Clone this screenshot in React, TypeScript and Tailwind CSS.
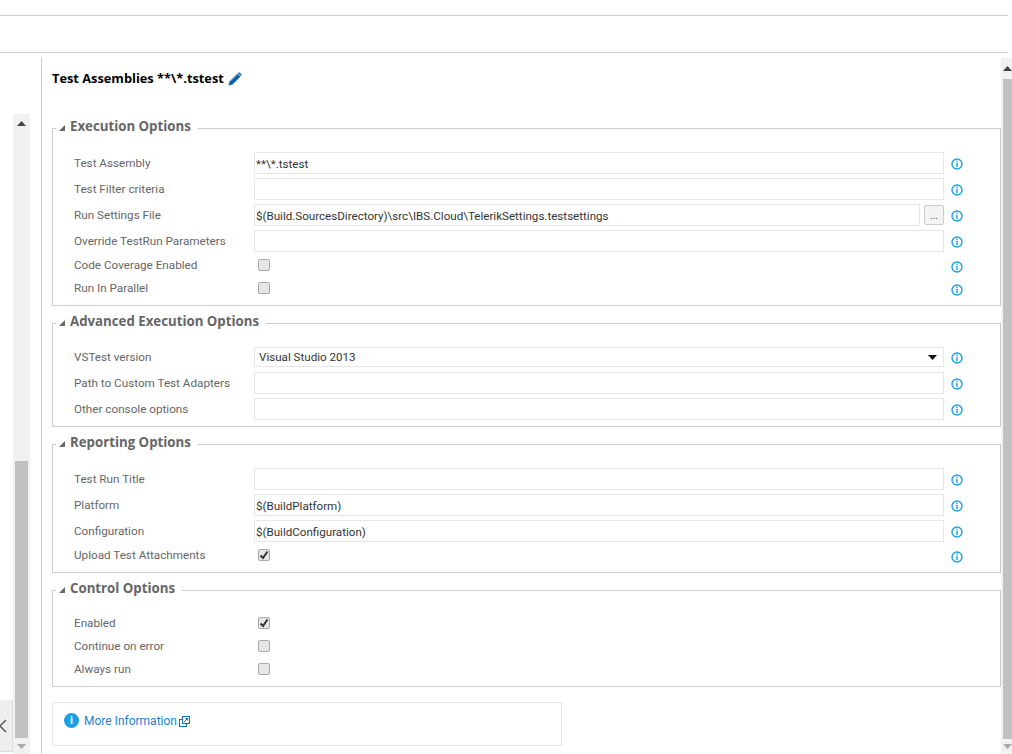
import { ReactNode } from 'react';

const font = 'font-["Roboto","Liberation_Sans",sans-serif]';
const headingFont = 'font-["Open_Sans","Liberation_Sans",sans-serif]';

const InfoIcon = () => (
  <svg width="12" height="12" viewBox="0 0 12 12" className="ml-[7px] mt-[2px] shrink-0">
    <circle cx="6" cy="6" r="5" fill="none" stroke="#1ba1e2" strokeWidth="1.4" />
    <rect x="5.3" y="2.6" width="1.4" height="1.4" fill="#1ba1e2" />
    <rect x="5.3" y="4.8" width="1.4" height="4.4" fill="#1ba1e2" />
  </svg>
);

const PencilIcon = () => (
  <svg width="14" height="14" viewBox="0 0 14 14" className="ml-[4px]">
    <path d="M0.5 13.5 L1.5 9.5 L9.5 1.5 L12.5 4.5 L4.5 12.5 Z" fill="#0f5fa8" />
    <path d="M10.3 0.7 Q11 0 11.8 0.7 L13.3 2.2 Q14 3 13.3 3.7 L12.9 4.1 L9.9 1.1 Z" fill="#0f5fa8" />
    <path d="M2.4 9.4 L9.6 2.4" stroke="#6aa5d8" strokeWidth="0.8" />
  </svg>
);

const ExternalIcon = () => (
  <svg width="11" height="11" viewBox="0 0 11 11" className="ml-[2px] mt-[2px]" fill="none" stroke="#106ebe">
    <rect x="0.5" y="3.5" width="7" height="7" />
    <rect x="3.5" y="0.5" width="7" height="7" fill="#fff" />
    <path d="M5 6 L8.5 2.5 M6.5 2.5 H8.5 V4.5" />
  </svg>
);

const Arrow = ({ down, color = '#444' }: { down?: boolean; color?: string }) => (
  <svg width="9" height="5" viewBox="0 0 9 5">
    <path d={down ? 'M0 0 H9 L4.5 5 Z' : 'M0 5 H9 L4.5 0 Z'} fill={color} />
  </svg>
);

const Row = ({ label, children }: { label: string; children?: ReactNode }) => (
  <div className="flex h-[26px] items-center">
    <label className="w-[180px] shrink-0 pt-[2px] text-[11.7px] text-[#666]">{label}</label>
    <div className="flex w-[690px] items-center">{children}</div>
    <InfoIcon />
  </div>
);

const TextField = ({ value = '' }: { value?: string }) => (
  <div className="h-[22px] flex-1 border border-[#e6e6e6] bg-white px-[1px] text-[11.6px] leading-[22px] text-[#333]">
    {value}
  </div>
);

const Checkbox = ({ checked }: { checked?: boolean }) => (
  <div className="mb-[1px] ml-[4px] flex h-[12px] w-[12px] items-center justify-center rounded-[2px] border border-[#aaa] bg-[#e6e6e6]">
    {checked && (
      <svg width="10" height="10" viewBox="0 0 10 10">
        <path d="M1.5 5.5 L4 8 L8.5 1.5" fill="none" stroke="#333" strokeWidth="2" />
      </svg>
    )}
  </div>
);

const CheckRow = ({ label, checked, info = true }: { label: string; checked?: boolean; info?: boolean }) => (
  <div className="flex h-[23px] items-center">
    <label className="w-[180px] shrink-0 text-[11.7px] text-[#666]">{label}</label>
    <div className="flex w-[690px] items-center">
      <Checkbox checked={checked} />
    </div>
    {info && <InfoIcon />}
  </div>
);

const Section = ({ title, tight, children }: { title: string; tight?: boolean; children: ReactNode }) => (
  <fieldset className={`border border-[#ccc] pl-[21px] ${tight ? 'pb-[4px]' : 'pb-[5px]'}`}>
    <legend className="ml-[-18px] flex h-[20px] items-center pl-[3px] pr-[7px]">
      <svg width="6" height="6" viewBox="0 0 6 6" className="mr-[5px]">
        <path d="M6 0 V6 H0 Z" fill="#666" />
      </svg>
      <span className={`mb-[2px] text-[13.25px] font-bold text-[#666] ${headingFont}`}>{title}</span>
    </legend>
    <div className={tight ? 'pt-[11px]' : 'pt-[12px]'}>{children}</div>
  </fieldset>
);

export default function App() {
  return (
    <div className={`h-[754px] w-[1012px] overflow-hidden bg-white ${font}`}>
      <div className="mr-[4px] h-[16px] border-b border-[#ccc]" />
      <div className="mr-[4px] h-[37px] border-b border-[#ccc]" />
      <div className="mt-[5px] flex h-[696px]">
        {/* left pane edge */}
        <div className="flex w-[41px] shrink-0 items-end">
          <div className="mb-[2px] flex h-[52px] w-[13px] items-center overflow-hidden border-r border-b border-[#ddd] bg-[#eee]">
            <svg width="10" height="14" viewBox="0 0 10 14" className="ml-[-2px]">
              <path d="M8 1 L2 7 L8 13" fill="none" stroke="#555" strokeWidth="1.4" />
            </svg>
          </div>
          <div className="flex h-[640px] w-[17px] flex-col items-center bg-[#f1f1f1]">
            <div className="flex h-[18px] items-center">
              <Arrow />
            </div>
            <div className="mt-[329px] h-[277px] w-[13px] shrink-0 bg-[#c1c1c1]" />
            <div className="flex flex-1 items-center">
              <Arrow down color="#aaa" />
            </div>
          </div>
        </div>

        {/* task settings */}
        <div className="w-[960px] shrink-0 border-l border-[#ccc] pl-[10px]">
          <div className="flex h-[40px] items-center pt-[1px]">
            <span className={`text-[12.8px] font-bold text-black ${headingFont}`}>Test Assemblies **\*.tstest</span>
            <PencilIcon />
          </div>
          <div className="mt-[20px] flex flex-col gap-[7px]">
            <Section title="Execution Options">
              <Row label="Test Assembly"><TextField value="**\*.tstest" /></Row>
              <Row label="Test Filter criteria"><TextField /></Row>
              <Row label="Run Settings File">
                <TextField value="$(Build.SourcesDirectory)\src\IBS.Cloud\TelerikSettings.testsettings" />
                <button className="ml-[4px] flex h-[20px] w-[20px] items-end justify-center rounded-[2px] border border-[#ccc] bg-[#f3f3f3] pb-[3px] text-[10px] leading-none text-[#555]">
                  ...
                </button>
              </Row>
              <Row label="Override TestRun Parameters"><TextField /></Row>
              <CheckRow label="Code Coverage Enabled" />
              <CheckRow label="Run In Parallel" />
            </Section>
            <Section title="Advanced Execution Options" tight>
              <Row label="VSTest version">
                <div className="flex h-[20px] flex-1 items-center justify-between border border-[#e6e6e6] pl-[4px] pr-[6px] text-[11.6px] leading-[20px] text-[#333]">
                  Visual Studio 2013
                  <svg width="9" height="5" viewBox="0 0 9 5">
                    <path d="M0 0 H9 L4.5 5 Z" fill="#111" />
                  </svg>
                </div>
              </Row>
              <Row label="Path to Custom Test Adapters"><TextField /></Row>
              <Row label="Other console options"><TextField /></Row>
            </Section>
            <Section title="Reporting Options">
              <Row label="Test Run Title"><TextField /></Row>
              <Row label="Platform"><TextField value="$(BuildPlatform)" /></Row>
              <Row label="Configuration"><TextField value="$(BuildConfiguration)" /></Row>
              <CheckRow label="Upload Test Attachments" checked />
            </Section>
            <Section title="Control Options">
              <CheckRow label="Enabled" checked info={false} />
              <CheckRow label="Continue on error" info={false} />
              <CheckRow label="Always run" info={false} />
            </Section>
          </div>
          <div className="mt-[15px] flex h-[44px] w-[510px] items-center border border-[#e6e6e6] pb-[7px] pl-[11px]">
            <span className="flex h-[15px] w-[15px] items-center justify-center rounded-full bg-[#1ba1e2] text-[11px] font-bold leading-none text-white">
              i
            </span>
            <a className="ml-[5px] text-[12px] text-[#1e7fcf]">More Information</a>
            <ExternalIcon />
          </div>
        </div>

        {/* right scrollbar */}
        <div className="flex w-[11px] shrink-0 flex-col bg-[#f1f1f1] pl-[2px]">
          <div className="flex h-[21px] shrink-0 items-center justify-center">
            <Arrow />
          </div>
          <div className="h-[660px] shrink-0 bg-[#c1c1c1]" />
          <div className="flex flex-1 items-center justify-center">
            <Arrow down color="#aaa" />
          </div>
        </div>
      </div>
    </div>
  );
}
